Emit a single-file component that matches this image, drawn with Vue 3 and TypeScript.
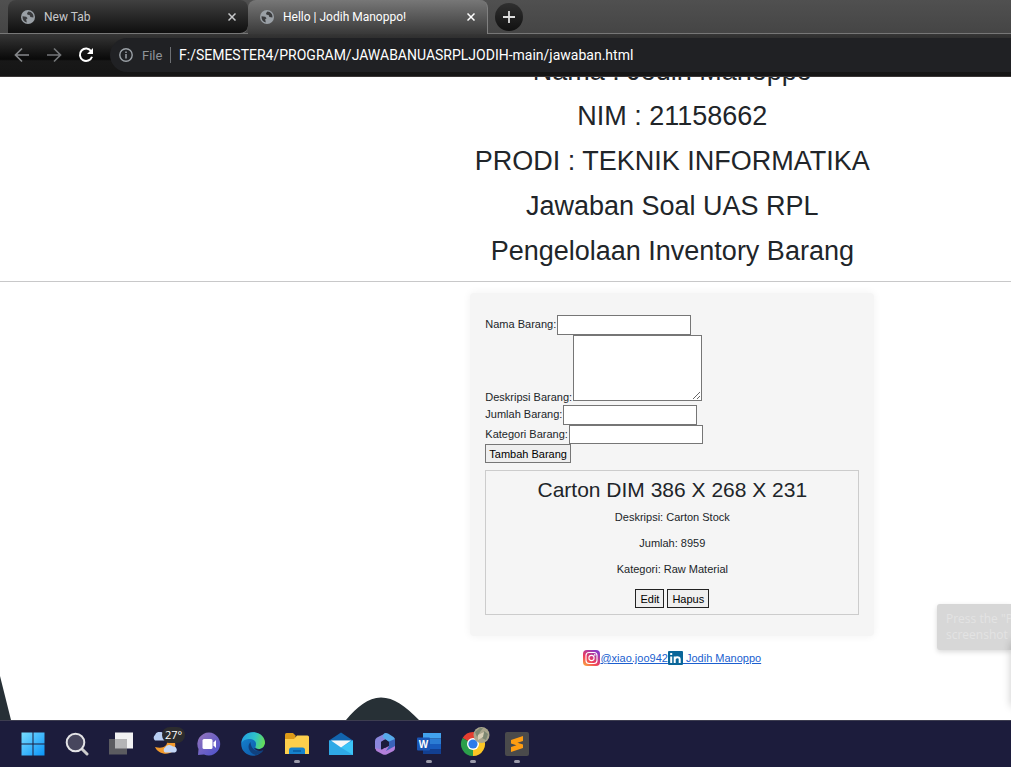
<script setup lang="ts">
import { ref } from 'vue'

interface Item {
  name: string
  description: string
  amount: string
  category: string
}

const headings: string[] = [
  'Nama : Jodih Manoppo',
  'NIM : 21158662',
  'PRODI : TEKNIK INFORMATIKA',
  'Jawaban Soal UAS RPL',
  'Pengelolaan Inventory Barang',
]

const items = ref<Item[]>([
  {
    name: 'Carton DIM 386 X 268 X 231',
    description: 'Carton Stock',
    amount: '8959',
    category: 'Raw Material',
  },
])

const address = ref('F:/SEMESTER4/PROGRAM/JAWABANUASRPLJODIH-main/jawaban.html')
const name = ref('')
const description = ref('')
const amount = ref('')
const category = ref('')

function addItem(): void {
  if (!name.value) return
  items.value.push({
    name: name.value,
    description: description.value,
    amount: amount.value,
    category: category.value,
  })
  name.value = description.value = amount.value = category.value = ''
}

function editItem(index: number): void {
  const item = items.value[index]
  name.value = item.name
  description.value = item.description
  amount.value = item.amount
  category.value = item.category
  items.value.splice(index, 1)
}

function removeItem(index: number): void {
  items.value.splice(index, 1)
}
</script>

<template>
  <div class="screen">
    <header class="browser">
      <div class="tabs">
        <div v-for="(title, i) in ['New Tab', 'Hello | Jodih Manoppo!']" :key="title" class="tab" :class="{ active: i === 1 }">
          <svg class="globe" viewBox="0 0 14 14" aria-hidden="true">
            <circle cx="7" cy="7" r="7" fill="#9aa0a6" />
            <path d="M1.5 6.2 5.2 6.8 6.6 8.2 5.2 9.2 5.8 12.5C3 12 1.3 9.5 1.5 6.2ZM7.4 1.5 6 3.2 6.6 4.8 8.6 5 9.4 7 12.4 7.4C12.9 4.4 10.8 1.7 7.4 1.5Z" fill="#3a3b3d" />
          </svg>
          <span class="tab-title">{{ title }}</span>
          <button class="close" :aria-label="'Close ' + title">
            <svg viewBox="0 0 8 8"><path d="M.5.5 7.5 7.5M7.5.5.5 7.5" stroke="currentColor" stroke-width="1.5" /></svg>
          </button>
        </div>
        <button class="new-tab" aria-label="New tab">
          <svg viewBox="0 0 12 12"><path d="M6 0V12M0 6H12" stroke="#ddd" stroke-width="1.8" /></svg>
        </button>
      </div>
      <div class="toolbar">
        <button class="nav" aria-label="Back">
          <svg viewBox="0 0 16 16"><path d="M15 8H2M8 1.5 1.5 8 8 14.5" fill="none" stroke="#85878a" stroke-width="1.7" /></svg>
        </button>
        <button class="nav" aria-label="Forward">
          <svg viewBox="0 0 16 16"><path d="M1 8H14M8 1.5 14.5 8 8 14.5" fill="none" stroke="#747679" stroke-width="1.7" /></svg>
        </button>
        <button class="nav" aria-label="Reload">
          <svg viewBox="0 0 16 16">
            <path d="M13.2 4.2A6.2 6.2 0 1 0 14 9.7" fill="none" stroke="#fff" stroke-width="2" />
            <path d="M15 1V7H9Z" fill="#fff" />
          </svg>
        </button>
        <div class="omnibox">
          <svg class="info" viewBox="0 0 14 14" aria-hidden="true">
            <circle cx="7" cy="7" r="6.2" fill="none" stroke="#9aa0a6" stroke-width="1.4" />
            <path d="M7 6V10.5M7 3.4V5" stroke="#9aa0a6" stroke-width="1.5" />
          </svg>
          <label class="scheme" for="address">File</label>
          <input id="address" v-model="address" class="address" type="text" />
        </div>
      </div>
    </header>

    <main class="page">
      <div class="titles">
        <h2 v-for="line in headings" :key="line">{{ line }}</h2>
      </div>
      <hr />
      <div class="content">
        <section class="card">
          <form @submit.prevent="addItem">
            <div class="field">
              <label for="name">Nama Barang:</label>
              <input id="name" v-model="name" type="text" />
            </div>
            <div class="field area">
              <label for="description">Deskripsi Barang:</label>
              <textarea id="description" v-model="description"></textarea>
            </div>
            <div class="field">
              <label for="amount">Jumlah Barang:</label>
              <input id="amount" v-model="amount" type="text" />
            </div>
            <div class="field last">
              <label for="category">Kategori Barang:</label>
              <input id="category" v-model="category" type="text" />
            </div>
            <button class="add" type="submit">Tambah Barang</button>
          </form>
          <article v-for="(item, i) in items" :key="i" class="item">
            <h3>{{ item.name }}</h3>
            <p>Deskripsi: {{ item.description }}</p>
            <p>Jumlah: {{ item.amount }}</p>
            <p>Kategori: {{ item.category }}</p>
            <div class="actions">
              <button type="button" @click="editItem(i)">Edit</button>
              <button type="button" @click="removeItem(i)">Hapus</button>
            </div>
          </article>
        </section>
        <footer class="links">
          <a href="#instagram">
            <svg class="instagram" viewBox="0 0 17 16" aria-hidden="true">
              <defs>
                <linearGradient id="ig" x1="0" y1="1" x2=".7" y2="0">
                  <stop offset="0" stop-color="#fdb33c" />
                  <stop offset=".45" stop-color="#ee3c5b" />
                  <stop offset="1" stop-color="#8a3ac8" />
                </linearGradient>
              </defs>
              <rect width="17" height="16" rx="4" fill="url(#ig)" />
              <rect x="3" y="2.5" width="11" height="11" rx="3" fill="none" stroke="#fff" stroke-width="1.1" />
              <circle cx="8.5" cy="8" r="2.6" fill="none" stroke="#fff" stroke-width="1.1" />
              <circle cx="11.8" cy="4.9" r=".8" fill="#fff" />
            </svg><span>@xiao.joo942</span>
          </a>
          <a href="#linkedin">
            <svg class="linkedin" viewBox="0 0 15 14" aria-hidden="true">
              <rect width="15" height="14" rx="1" fill="#0a6699" />
              <path d="M3.2 5.5V12M3.2 2V4" stroke="#fff" stroke-width="2" />
              <path d="M6.7 12V5.5M6.7 8.5C6.7 5.7 11.7 5.2 11.7 8.3V12" fill="none" stroke="#fff" stroke-width="2" />
            </svg><span>&nbsp;Jodih Manoppo</span>
          </a>
        </footer>
      </div>
      <svg class="wave" viewBox="0 0 420 44" aria-hidden="true">
        <path d="M0 0 11 44H0ZM346 44C357 31 368 21.500 381 21.500S405 30 419 44Z" fill="#273036" />
      </svg>
      <aside class="toast">Press the "P<br />screenshot</aside>
      <div class="edge-shadow"></div>
    </main>

    <nav class="taskbar" aria-label="Taskbar">
      <button aria-label="Start">
        <svg viewBox="0 0 24 24">
          <defs><linearGradient id="win" x1="0" y1="0" x2="1" y2="1"><stop stop-color="#78dcff" /><stop offset="1" stop-color="#0a94f8" /></linearGradient></defs>
          <path d="M.5.5H11.500V11.500H.5ZM12.500.5H23.500V11.500H12.500ZM.5 12.500H11.500V23.500H.5ZM12.500 12.500H23.500V23.500H12.500Z" fill="url(#win)" />
        </svg>
      </button>
      <button aria-label="Search">
        <svg viewBox="0 0 24 24">
          <path d="M17 17 22 22" stroke="#ccc" stroke-width="3" stroke-linecap="round" />
          <circle cx="10.500" cy="10.500" r="8.800" fill="#47465d" stroke="#e3e3e6" stroke-width="2" />
        </svg>
      </button>
      <button aria-label="Task view">
        <svg viewBox="0 0 24 24">
          <rect x="6" y=".5" width="18" height="16" fill="#f1f1f2" />
          <rect x="0" y="7" width="18" height="15.500" fill="#5b5b60" />
          <rect x="6" y="7" width="12" height="9.500" fill="#b4b4b6" />
        </svg>
      </button>
      <button class="weather" aria-label="Weather">
        <svg viewBox="0 0 24 24">
          <path d="M2 8.500A3.500 3.500 0 0 1 2 3 5 5 0 0 1 10 1L13 8.500Z" fill="#b7cdf2" />
          <path d="M2 15C10 17 14 14 14 10.500H22A10 10 0 0 1 20 19C15 24 5 22 2 15Z" fill="#f39a2d" />
          <path d="M12 20.500A3 3 0 0 1 12 15.500 5 5 0 0 1 20 14.500 3.200 3.200 0 0 1 22 20.500Z" fill="#c6d8f7" />
        </svg>
        <span class="badge">27°</span>
      </button>
      <button aria-label="Chat">
        <svg viewBox="0 0 24 24">
          <defs><linearGradient id="chat" x1="0" y1="0" x2="1" y2="1"><stop stop-color="#9675bb" /><stop offset="1" stop-color="#4a50cc" /></linearGradient></defs>
          <path d="M12 .5A11.500 11.500 0 1 1 7 22.500L1 23 1.500 17A11.500 11.500 0 0 1 12 .5Z" fill="url(#chat)" />
          <rect x="5.500" y="7" width="10" height="10" rx="1.500" fill="#fff" />
          <path d="M16.500 10.500 19 8V16L16.500 13.500Z" fill="#fff" />
        </svg>
      </button>
      <button aria-label="Edge">
        <svg viewBox="0 0 24 24">
          <defs>
            <linearGradient id="edgeTop" x1="0" y1=".3" x2="1" y2=".5"><stop stop-color="#229fe2" /><stop offset=".55" stop-color="#2fc3c9" /><stop offset="1" stop-color="#67dc53" /></linearGradient>
            <linearGradient id="edgeLow" x1="0" y1="0" x2="1" y2="1"><stop stop-color="#1688d4" /><stop offset="1" stop-color="#0c4f9f" /></linearGradient>
          </defs>
          <circle cx="12" cy="12" r="11.800" fill="url(#edgeLow)" />
          <path d="M.5 11C1 4 6 .2 12 .2 20 .2 24 6 24 10.500 24 16 19 18 15.500 16.500 13.500 15.500 15 14.500 15 12 15 8.500 11 6.500 7.500 7 4 7.300 1.500 9 .5 11Z" fill="url(#edgeTop)" />
          <path d="M9.500 10C5 15 9 22 15 23 19 22.500 21.500 20 22.500 18 18 20.500 10 19 9.500 10Z" fill="#10417f" />
          <path d="M15 16.500C19 18.500 23 16 24 12V17L22.500 18C19 20 15 19 13 16Z" fill="#1d1d3e" />
        </svg>
      </button>
      <button class="running" aria-label="File Explorer">
        <svg viewBox="0 0 24 24">
          <path d="M0 6V2.500Q0 1 1.500 1H8L10.500 3.500V8H0Z" fill="#dd9a17" />
          <path d="M0 7H9L12 3.500H22.500Q24 3.500 24 5V22H0Z" fill="#fdcf4c" />
          <path d="M4 22V18Q4 15.500 6.500 15.500H17.500Q20 15.500 20 18V22Z" fill="#1682cd" />
          <path d="M8 19H16" stroke="#0a5a9c" stroke-width="1.400" />
        </svg>
      </button>
      <button aria-label="Mail">
        <svg viewBox="0 0 24 24">
          <path d="M0 8.500 12 .5 24 8.500V15H0Z" fill="#1264ae" />
          <path d="M0 8.500V23H24V8.500Z" fill="#2fa9e6" />
          <path d="M24 8.500V23L12 15.500Z" fill="#3cc4f7" />
          <path d="M2 8.500H22L12 15.500Z" fill="#f6f7f9" />
        </svg>
      </button>
      <button aria-label="Microsoft 365">
        <svg viewBox="0 0 24 24">
          <path d="M13 1 4 5.500Q2 6.500 2 9V16.500L8 18.500V10L15 6Z" fill="#8a86dc" />
          <path d="M11 1.500Q13 .5 15 1.500L20.500 5Q22 6 22 8V13L16 10 9.500 5Z" fill="#56aaea" />
          <path d="M22 12V16Q22 18 20.500 19L13.500 22.500Q12 23 10 22.500L3.500 19 2 16 9 17.500 16 13Z" fill="#b27fda" />
          <path d="M16 9.500 22 7V14L13 19 16 14Z" fill="#3a62b8" />
          <path d="M8.500 9.500 12 7.500 16 10V14L12 16 8.500 14Z" fill="#1c1c3c" />
        </svg>
      </button>
      <button class="running" aria-label="Word">
        <svg viewBox="0 0 24 24">
          <path d="M6 1H24V6.500H6Z" fill="#42a2ee" />
          <path d="M6 6.500H24V12H6Z" fill="#2b7cd4" />
          <path d="M6 12H24V17H6Z" fill="#185bbd" />
          <path d="M6 17H24V22H6Z" fill="#123f91" />
          <rect x="0" y="5.500" width="13" height="13" rx="1" fill="#1a56b5" />
          <text x="6.500" y="15.500" text-anchor="middle" class="word-letter">W</text>
        </svg>
      </button>
      <button class="running" aria-label="Chrome">
        <svg viewBox="0 0 24 24" overflow="visible">
          <path d="M12 12 1.600 6A12 12 0 0 1 22.400 6Z" fill="#e43e30" />
          <path d="M12 12 22.400 6A12 12 0 0 1 12 24Z" fill="#fcc624" />
          <path d="M12 12V24A12 12 0 0 1 1.600 6Z" fill="#2b9f4b" />
          <circle cx="12" cy="12" r="6" fill="#fff" />
          <circle cx="12" cy="12" r="4.600" fill="#2d7bea" />
          <circle cx="20.500" cy="3" r="8" fill="#a9a58c" />
          <path d="M14 0 19-4 22-4 19 0 16 5ZM23-1 27 2 25 8 21 6Z" fill="#7d8772" />
          <path d="M17 3 23 0 22 5 17 8Z" fill="#d9cfb5" />
        </svg>
      </button>
      <button class="running" aria-label="Sublime Text">
        <svg viewBox="0 0 24 24">
          <rect width="24" height="24" rx="2" fill="#4a4a4b" />
          <path d="M6 8 18 4V9L12.500 10.800 18 12.500V16L6 20V15L11.500 13.200 6 11.500Z" fill="#ff9d12" />
        </svg>
      </button>
    </nav>
  </div>
</template>

<style>
body {
  margin: 0;
}
</style>

<style scoped>
.screen {
  display: flex;
  flex-direction: column;
  height: 100vh;
  overflow: hidden;
  background: #fff;
  color: #212529;
  font-family: "Liberation Sans", Arial, sans-serif;
  font-size: 11px;
}

*,
*::before,
*::after {
  box-sizing: border-box;
}

button {
  font-family: inherit;
  cursor: pointer;
}

.browser {
  flex: none;
  font-family: Roboto, "Open Sans", sans-serif;
}

.tabs {
  display: flex;
  height: 34px;
  padding-left: 8px;
  background: linear-gradient(#505050, #454545);
  border-bottom: 1px solid #777;
}

.tab {
  display: flex;
  align-items: center;
  gap: 9px;
  width: 240px;
  height: 34px;
  padding: 0 12px 0 13px;
  border-bottom: 1px solid #777;
  border-radius: 8px 8px 8px 0;
  background: linear-gradient(#404040, #0f0f0f);
  color: #c8c9cb;
  font-size: 12px;
}

.tab.active {
  padding-left: 12px;
  border-right: 1px solid #808080;
  border-bottom: 0;
  border-radius: 8px 8px 0 0;
  background: linear-gradient(#777, #393939);
  color: #fff;
}

.globe {
  width: 14px;
  height: 14px;
}

.tab-title {
  flex: 1;
  white-space: nowrap;
}

.close {
  display: flex;
  padding: 0;
  border: 0;
  background: none;
  color: inherit;
}

.close svg {
  width: 8px;
  height: 8px;
}

.new-tab {
  display: flex;
  align-items: center;
  justify-content: center;
  width: 28px;
  height: 28px;
  margin: 3px 0 0 7px;
  padding: 0;
  border: 0;
  border-radius: 50%;
  background: linear-gradient(#303030, #111);
}

.new-tab svg {
  width: 12px;
  height: 12px;
}

.toolbar {
  display: flex;
  align-items: center;
  height: 43px;
  padding-left: 14px;
  background: linear-gradient(#363636, #090909 60%, #181818 64%, #151515);
  border-bottom: 1px solid #3a3636;
}

.nav {
  display: flex;
  width: 32px;
  padding: 0;
  border: 0;
  background: none;
}

.nav svg {
  width: 16px;
  height: 16px;
}

.omnibox {
  display: flex;
  flex: 1;
  align-items: center;
  height: 34px;
  margin-right: -20px;
  padding-left: 9px;
  border-radius: 17px;
  background: #202124;
}

.info {
  width: 14px;
  height: 14px;
}

.scheme {
  width: 20px;
  margin: 0 8px 0 9px;
  color: #8f9499;
  font-size: 13px;
}

.address {
  flex: 1;
  height: 16px;
  padding: 0 0 0 8px;
  border: 0;
  border-left: 1px solid #6d7074;
  outline: 0;
  background: none;
  color: #fff;
  font-family: inherit;
  font-size: 14px;
}

.page {
  position: relative;
  flex: 1;
  min-height: 0;
  overflow: hidden;
}

.titles {
  margin-top: -28px;
  padding-left: 33%;
  text-align: center;
}

h2 {
  margin: 0;
  font-size: 27px;
  font-weight: 400;
  line-height: 45px;
}

hr {
  margin: 7px 0 11px;
  border: 0;
  border-top: 1px solid #c8c8c9;
}

.content {
  display: flex;
  flex-direction: column;
  align-items: center;
  padding-left: 33%;
}

.card {
  width: 404px;
  padding: 22px 15px 21px;
  border-radius: 4px;
  background: #f5f5f5;
  box-shadow: 0 0 8px rgba(0, 0, 0, 0.06);
}

.field {
  display: flex;
  align-items: center;
  gap: 1px;
  height: 20px;
}

.field label {
  padding-bottom: 2px;
}

.field.area {
  align-items: flex-start;
  height: 70px;
}

.field.area label {
  align-self: flex-end;
  padding-bottom: 0;
  line-height: 16px;
}

.field input {
  width: 134px;
  height: 20px;
  padding: 1px 2px;
  border: 1px solid #767676;
  background: #fff;
}

.field.last,
.field.last input {
  height: 19px;
}

textarea {
  width: 129px;
  height: 66px;
  border: 1px solid #767676;
  background: #fff;
}

.add,
.actions button {
  height: 19px;
  padding: 0 4px;
  border: 1px solid #767676;
  background: #efefef;
  color: #000;
  font-size: 11px;
  line-height: 16px;
}

.add {
  display: block;
  padding: 0 3px;
}

.actions button {
  border-color: #222;
}

.item {
  margin-top: 7px;
  padding: 6px;
  border: 1px solid #ccc;
  text-align: center;
}

h3 {
  margin: 0 0 6px;
  font-size: 21px;
  font-weight: 400;
  line-height: 26px;
}

p {
  margin: 0 0 10px;
  line-height: 16px;
}

.actions {
  display: flex;
  justify-content: center;
  gap: 3px;
  padding-top: 2px;
}

.links {
  display: flex;
  margin-top: 14px;
}

.links a {
  display: flex;
  align-items: center;
  color: #1b5fcf;
}

.instagram {
  width: 17px;
  height: 16px;
}

.linkedin {
  width: 15px;
  height: 14px;
}

.wave {
  position: absolute;
  bottom: 0;
  left: 0;
  width: 420px;
  height: 44px;
}

.toast {
  position: absolute;
  right: 0;
  bottom: 70px;
  width: 74px;
  height: 46px;
  padding: 7px 0 0 9px;
  border-radius: 3px 0 0 3px;
  background: #d7d7d7;
  box-shadow: 0 2px 5px rgba(0, 0, 0, 0.15);
  color: #e3e3e3;
  font-family: "Open Sans", sans-serif;
  font-size: 12px;
  line-height: 16px;
  white-space: nowrap;
}

.edge-shadow {
  position: absolute;
  right: -8px;
  bottom: 14px;
  width: 8px;
  height: 64px;
  box-shadow: 0 0 8px rgba(0, 0, 0, 0.22);
}

.taskbar {
  display: flex;
  flex: none;
  gap: 20px;
  height: 47px;
  padding-left: 21px;
  background: #1c1c3c;
  border-top: 1px solid #3d3d50;
}

.taskbar button {
  position: relative;
  width: 24px;
  padding: 0;
  border: 0;
  background: none;
}

.taskbar svg {
  display: block;
  width: 24px;
  height: 24px;
}

.running::after {
  position: absolute;
  bottom: 4px;
  left: 9px;
  width: 6px;
  height: 3px;
  border-radius: 2px;
  background: #9a9aaa;
  content: "";
}

.badge {
  position: absolute;
  top: 6px;
  left: 9px;
  padding: 0 3px;
  border-radius: 8px;
  background: #2c2c2e;
  color: #fff;
  font-family: "Open Sans", sans-serif;
  font-size: 11px;
  line-height: 16px;
}

.word-letter {
  fill: #fff;
  font-size: 10px;
  font-weight: 700;
}
</style>
